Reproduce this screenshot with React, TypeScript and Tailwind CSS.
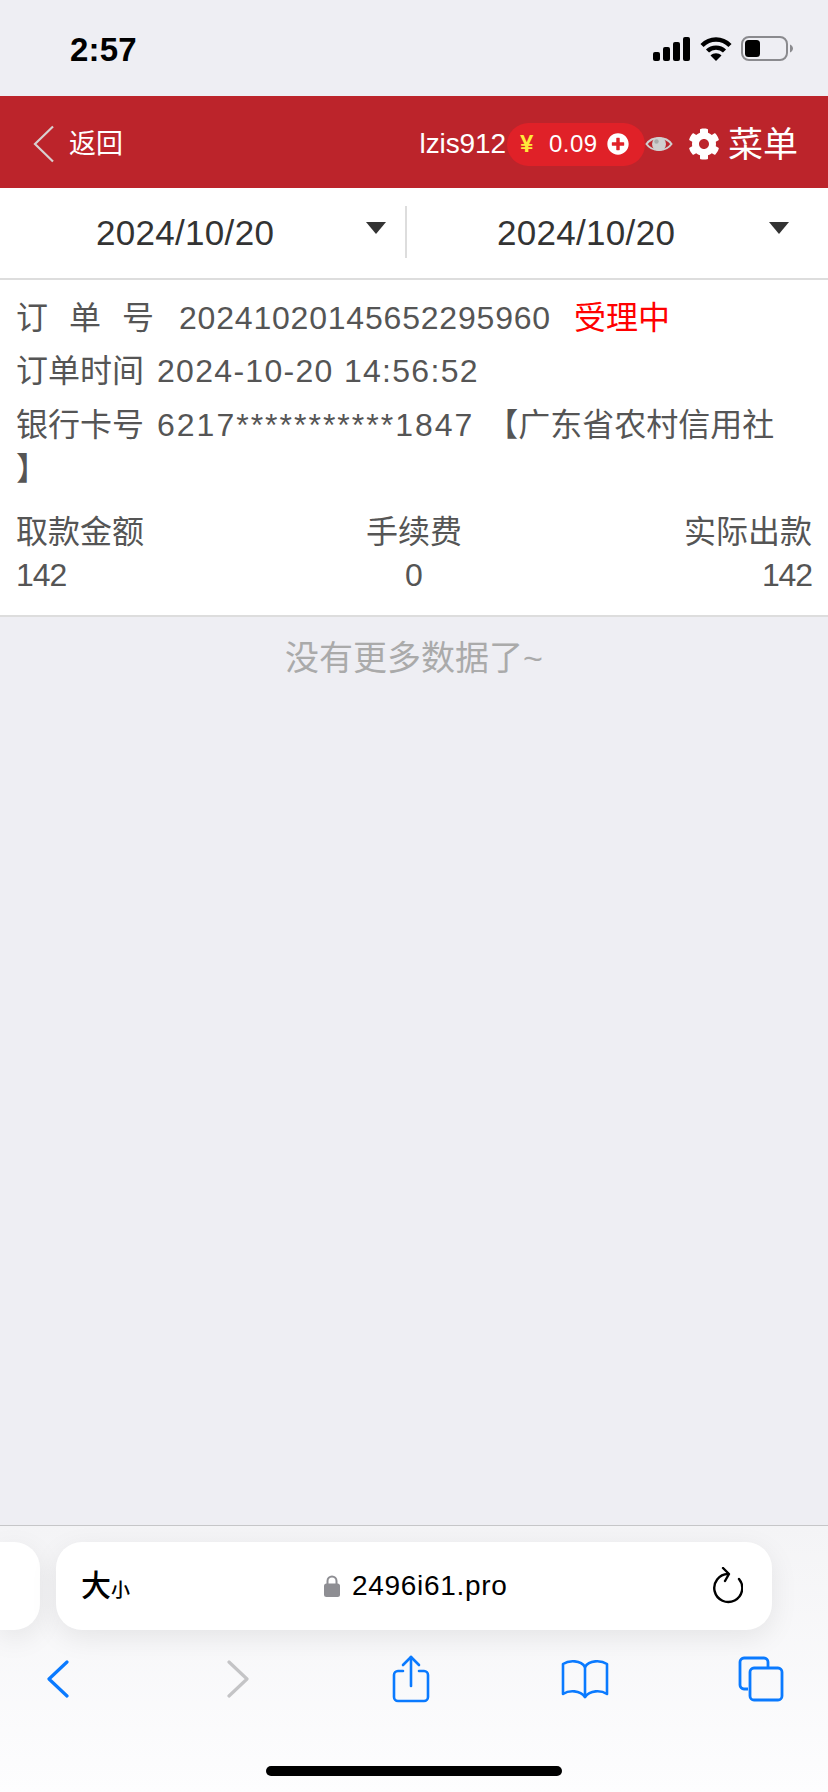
import { FaCog, FaPlusCircle } from "react-icons/fa";

const fontStack = "font-['Liberation_Sans','Noto_Sans_CJK_SC',sans-serif]";

function StatusBar() {
  return (
    <div className="h-[96px] shrink-0 bg-[#eeeef3] flex items-start pt-[33px] pl-[70px]">
      <span className="text-[33px] leading-[34px] font-bold text-black tracking-[0.2px]">2:57</span>
      <div className="ml-auto mt-[3px] flex items-start">
        <svg width="37" height="24" viewBox="0 0 37 24" className="mt-[1px]" fill="#000">
          <rect x="0" y="15" width="7" height="9" rx="2" />
          <rect x="10" y="10" width="7" height="14" rx="2" />
          <rect x="20" y="5" width="7" height="19" rx="2" />
          <rect x="30" y="0" width="7" height="24" rx="2" />
        </svg>
        <svg width="32" height="25" viewBox="0 0 32 25" className="ml-[10px]" fill="none" stroke="#000" strokeWidth="4.4">
          <path d="M2 9.5 C 10 1.5, 22 1.5, 30 9.5" />
          <path d="M7.5 15 C 12 10.5, 20 10.5, 24.5 15" />
          <path d="M16 25 L10.5 19.5 C 13.5 16.5, 18.5 16.5, 21.5 19.5 Z" fill="#000" stroke="none" />
        </svg>
        <svg width="52" height="25" viewBox="0 0 52 25" className="ml-[9px] mr-[35px]">
          <rect x="1" y="1" width="45" height="23" rx="7" fill="none" stroke="#8a8a8e" strokeWidth="2" />
          <rect x="4" y="4" width="15" height="17" rx="3.5" fill="#000" />
          <path d="M49 8.5 C 51 9.5, 52 11, 52 12.5 C 52 14, 51 15.5, 49 16.5 Z" fill="#8a8a8e" />
        </svg>
      </div>
    </div>
  );
}

function EyeIcon() {
  return (
    <svg width="28" height="20" viewBox="0 0 28 20">
      <path d="M1.5 10 C 7 2, 21 2, 26.5 10 C 21 18, 7 18, 1.5 10 Z" fill="none" stroke="#cfcfcf" strokeWidth="2" />
      <circle cx="14" cy="10" r="7" fill="#cfcfcf" />
      <circle cx="11.5" cy="7.5" r="2.2" fill="#a9a9a9" />
    </svg>
  );
}

function Header() {
  return (
    <div className="h-[92px] shrink-0 bg-[#bc242b] flex items-center pt-[4px] text-white">
      <svg width="22" height="38" viewBox="0 0 22 38" className="ml-[33px]" fill="none" stroke="#d8d0d0" strokeWidth="2.2">
        <path d="M20 1.5 L2 19 L20 36.5" />
      </svg>
      <span className="ml-[14px] text-[27px] leading-none">返回</span>
      <span className="ml-auto text-[28px] leading-none tracking-[-0.1px]">lzis912</span>
      <div className="ml-[1px] w-[138px] h-[43px] rounded-full bg-[#e02128] flex items-center pl-[13px]">
        <span className="text-[24px] leading-none font-bold text-[#ffe93b] w-[18px]">¥</span>
        <span className="ml-[11px] text-[24px] leading-none tracking-[0.5px]">0.09</span>
        <FaPlusCircle className="ml-[9px] text-[22px]" />
      </div>
      <EyeIcon />
      <FaCog className="ml-[15px] text-[32px]" />
      <span className="ml-[8px] mr-[30px] text-[35px] leading-none">菜单</span>
    </div>
  );
}

function DatePicker({ value }: { value: string }) {
  return (
    <div className="h-full flex items-center">
      <span className="text-[35px] leading-none text-[#333] tracking-[0.3px]">{value}</span>
    </div>
  );
}

function Caret() {
  return <div className="mb-[8px] w-0 h-0 border-l-[10px] border-r-[10px] border-t-[12px] border-l-transparent border-r-transparent border-t-[#333]" />;
}

function DateBar() {
  return (
    <div className="h-[92px] shrink-0 bg-white border-b-2 border-[#dddddd] flex items-center pb-[2px]">
      <div className="w-[405px] h-full flex items-center pl-[96px] pr-[19px] justify-between">
        <DatePicker value="2024/10/20" />
        <Caret />
      </div>
      <div className="w-[2px] h-[52px] bg-[#dddddd]" />
      <div className="flex-1 h-full flex items-center pl-[90px] pr-[39px] justify-between">
        <DatePicker value="2024/10/20" />
        <Caret />
      </div>
    </div>
  );
}

function OrderCard() {
  return (
    <div className="bg-white border-b-2 border-[#dddddd] pl-[16px] pr-[16px] pt-[11px] h-[337px] text-[32px] text-[#555]">
      <div className="h-[53px] leading-[54px] flex">
        <span className="flex gap-[21px] w-[163px]">
          <span>订</span>
          <span>单</span>
          <span>号</span>
        </span>
        <span className="tracking-[0.8px]">20241020145652295960</span>
        <span className="ml-[23px] text-[#ff0000]">受理中</span>
      </div>
      <div className="h-[54px] leading-[54px] flex">
        <span className="w-[141px]">订单时间</span>
        <span className="tracking-[1.3px]">2024-10-20 14:56:52</span>
      </div>
      <div className="h-[54px] leading-[54px] flex">
        <span className="w-[141px]">银行卡号</span>
        <span className="tracking-[2px]">6217***********1847</span>
        <span className="ml-[12px]">【广东省农村信用社</span>
      </div>
      <div className="h-[38px] leading-[34px]">】</div>
      <div className="mt-[20px] flex justify-between">
        <div className="text-left">
          <div className="h-[43px] leading-[44px]">取款金额</div>
          <div className="h-[44px] leading-[44px] tracking-[-1.1px]">142</div>
        </div>
        <div className="text-center">
          <div className="h-[43px] leading-[44px]">手续费</div>
          <div className="h-[44px] leading-[44px]">0</div>
        </div>
        <div className="text-right">
          <div className="h-[43px] leading-[44px]">实际出款</div>
          <div className="h-[44px] leading-[44px] tracking-[-1.1px]">142</div>
        </div>
      </div>
    </div>
  );
}

function SafariToolbar() {
  return (
    <div className="h-[267px] shrink-0 border-t border-[#c6c6c8] bg-gradient-to-b from-[#f4f4f6] to-[#fdfdfe] flex flex-col">
      <div className="mt-[16px] h-[88px] flex">
        <div className="w-[40px] h-full bg-white rounded-r-[26px] shadow-[0_8px_28px_rgba(0,0,0,0.08)]" />
        <div className="ml-[16px] w-[716px] h-full bg-white rounded-[26px] shadow-[0_8px_28px_rgba(0,0,0,0.08)] flex items-center pl-[25px] pr-[29px] text-black">
          <span className="text-[30px] leading-none font-medium">大</span>
          <span className="text-[19px] leading-none mt-[8px] font-medium">小</span>
          <svg width="16" height="22" viewBox="0 0 16 22" className="ml-[194px]" fill="#8e8e93">
            <path d="M3.5 9 V6 a4.5 4.5 0 0 1 9 0 V9" fill="none" stroke="#8e8e93" strokeWidth="2" />
            <rect x="0" y="8.5" width="16" height="13.5" rx="2.5" />
          </svg>
          <span className="ml-[12px] text-[28px] leading-none tracking-[0.7px]">2496i61.pro</span>
          <svg width="32" height="38" viewBox="0 0 32 38" className="ml-auto" fill="none" stroke="#000" strokeWidth="2.4" strokeLinecap="round" strokeLinejoin="round">
            <path d="M17 7 A14 14 0 1 0 28 12" />
            <path d="M12 1 L18 7 L14 14" />
          </svg>
        </div>
      </div>
      <div className="mt-[25px] h-[48px] flex items-center pl-[47px]">
        <svg width="22" height="38" viewBox="0 0 22 38" fill="none" stroke="#0a7aff" strokeWidth="3.2" strokeLinecap="round" strokeLinejoin="round">
          <path d="M20 2 L2 19 L20 36" />
        </svg>
        <svg width="22" height="38" viewBox="0 0 22 38" className="ml-[158px]" fill="none" stroke="#c4c4c6" strokeWidth="3.2" strokeLinecap="round" strokeLinejoin="round">
          <path d="M2 2 L20 19 L2 36" />
        </svg>
        <svg width="38" height="48" viewBox="0 0 38 48" className="ml-[143px]" fill="none" stroke="#0a7aff" strokeWidth="2.6" strokeLinecap="round" strokeLinejoin="round">
          <path d="M11 16 H6 a4 4 0 0 0 -4 4 V42 a4 4 0 0 0 4 4 H32 a4 4 0 0 0 4 -4 V20 a4 4 0 0 0 -4 -4 H27" />
          <path d="M19 31 V2" />
          <path d="M11 10 L19 2 L27 10" />
        </svg>
        <svg width="48" height="40" viewBox="0 0 48 40" className="ml-[131px]" fill="none" stroke="#0a7aff" strokeWidth="2.6" strokeLinecap="round" strokeLinejoin="round">
          <path d="M24 8 C 20 1, 8 1, 2 5 V35 C 8 31, 19 31, 24 38 C 29 31, 40 31, 46 35 V5 C 40 1, 28 1, 24 8 Z" />
          <path d="M24 8 V38" />
        </svg>
        <svg width="46" height="46" viewBox="0 0 46 46" className="ml-[129px]" fill="none" stroke="#0a7aff" strokeWidth="2.8" strokeLinejoin="round">
          <path d="M10 33 H6 a4 4 0 0 1 -4 -4 V6 a4 4 0 0 1 4 -4 H26 a4 4 0 0 1 4 4 V12" />
          <rect x="12" y="12" width="32" height="32" rx="4" />
        </svg>
      </div>
      <div className="mt-auto mb-[16px] self-center w-[296px] h-[10px] rounded-full bg-black" />
    </div>
  );
}

export default function App() {
  return (
    <div className={`w-[828px] h-[1792px] flex flex-col bg-[#eeeef3] overflow-hidden ${fontStack}`}>
      <StatusBar />
      <Header />
      <DateBar />
      <OrderCard />
      <div className="flex-1 pt-[17px] text-center text-[34px] leading-[48px] text-[#aaaaaa]">没有更多数据了~</div>
      <SafariToolbar />
    </div>
  );
}
